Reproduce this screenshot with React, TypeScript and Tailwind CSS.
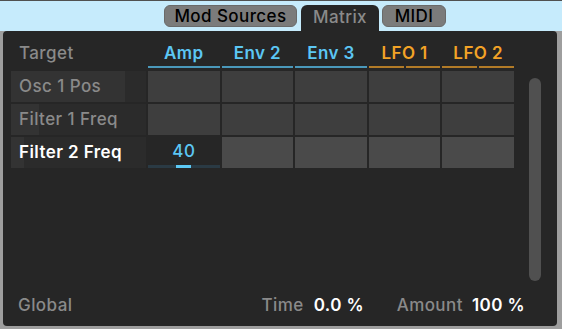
import React from "react";

const cols = [
  { name: "Amp", kind: "blue" },
  { name: "Env 2", kind: "blue" },
  { name: "Env 3", kind: "blue" },
  { name: "LFO 1", kind: "orange" },
  { name: "LFO 2", kind: "orange" },
];

const rows = [
  { name: "Osc 1 Pos", bar: 114, selected: false },
  { name: "Filter 1 Freq", bar: 28, selected: false },
  { name: "Filter 2 Freq", bar: 13, selected: true },
];

function Header() {
  return (
    <div className="flex items-end">
      <div className="w-[135px] pl-[8px] text-[#8a8a8a] font-medium leading-[20px] mb-[5px]">Target</div>
      <div className="ml-[2px] w-[366px] grid grid-cols-5 gap-[2px]">
        {cols.map((c) => (
          <div key={c.name} className="flex flex-col">
            <div
              className={
                c.kind === "blue"
                  ? "text-center leading-[20px] font-semibold text-[#5cc6f4]"
                  : "text-center leading-[20px] font-semibold text-[#f3a326]"
              }
            >
              {c.name}
            </div>
            {c.kind === "blue" ? (
              <div className="mt-[3px] h-[2px] bg-[#4a98ba]" />
            ) : (
              <div className="mt-[3px] h-[2px] flex gap-[2px]">
                <div className="flex-1 bg-[#b27b27]" />
                <div className="flex-1 bg-[#b27b27]" />
              </div>
            )}
          </div>
        ))}
      </div>
    </div>
  );
}

function Row({ r }: { r: (typeof rows)[number] }) {
  return (
    <div className="flex h-[31px]">
      <div className="relative w-[135px] bg-[#2b2b2b] flex items-center">
        <div className="absolute left-0 top-0 bottom-0 bg-[#333333]" style={{ width: r.bar }} />
        <span
          className={
            r.selected
              ? "relative pl-[8px] text-white font-semibold"
              : "relative pl-[8px] text-[#8a8a8a] font-medium"
          }
        >
          {r.name}
        </span>
      </div>
      <div className="ml-[2px] w-[366px] grid grid-cols-5 gap-[2px]">
        {cols.map((c, i) =>
          r.selected && i === 0 ? (
            <div key={c.name} className="bg-[#262626] flex flex-col">
              <div className="flex-1 flex items-center justify-center text-[#5cc6f4] font-medium leading-none pt-[1px]">
                40
              </div>
              <div className="h-[3px] bg-[#2a3a44] flex justify-center">
                <div className="w-[15px] bg-[#5cc8f4]" />
              </div>
            </div>
          ) : (
            <div key={c.name} className={r.selected ? "bg-[#4a4a4a]" : "bg-[#3e3e3e]"} />
          )
        )}
      </div>
    </div>
  );
}

export default function App() {
  return (
    <div
      className="w-[562px] h-[329px] bg-[#9e9e9e] flex flex-col overflow-hidden text-[17px] tracking-[0.025em]"
      style={{ fontFamily: "Inter, 'Noto Sans', sans-serif" }}
    >
      <div className="h-px bg-[#505050]" />
      <div className="h-[30px] bg-[#c6ebfc] flex items-start pt-[4px] pl-[164px]">
        <div className="w-[133px] h-[22px] rounded-[6px] bg-[#7b7b7b] border border-[#6a6a6a] flex items-center justify-center text-black font-medium leading-none">
          Mod Sources
        </div>
        <div className="ml-[4px] w-[78px] h-[26px] rounded-t-[6px] bg-[#262626] flex items-start justify-center pt-[4px] text-[#8a8a8a] font-medium leading-none">
          Matrix
        </div>
        <div className="ml-[3px] w-[64px] h-[22px] rounded-[6px] bg-[#7b7b7b] border border-[#6a6a6a] flex items-center justify-center text-black font-medium leading-none">
          MIDI
        </div>
      </div>
      <div className="flex-1 ml-[3px] mr-[5px] mb-[3px] bg-[#262626] rounded-[4px] flex flex-col">
        <div className="flex-1 flex">
          <div className="pl-[8px] pt-[12px] flex flex-col">
            <Header />
            <div className="mt-[3px] flex flex-col gap-[2px]">
              {rows.map((r) => (
                <Row key={r.name} r={r} />
              ))}
            </div>
          </div>
          <div className="ml-[15px] mt-[47px] w-[12px] h-[203px] rounded-full bg-[#505050]" />
        </div>
        <div className="h-[24px] mb-[9px] flex items-center pl-[15px] leading-[24px]">
          <span className="text-[#8a8a8a] font-medium">Global</span>
          <span className="ml-auto text-[#8a8a8a] font-medium">Time</span>
          <span className="ml-[10px] w-[83px] text-white font-semibold">0.0 %</span>
          <span className="text-[#8a8a8a] font-medium">Amount</span>
          <span className="ml-[9px] mr-[32px] text-white font-semibold">100 %</span>
        </div>
      </div>
    </div>
  );
}
